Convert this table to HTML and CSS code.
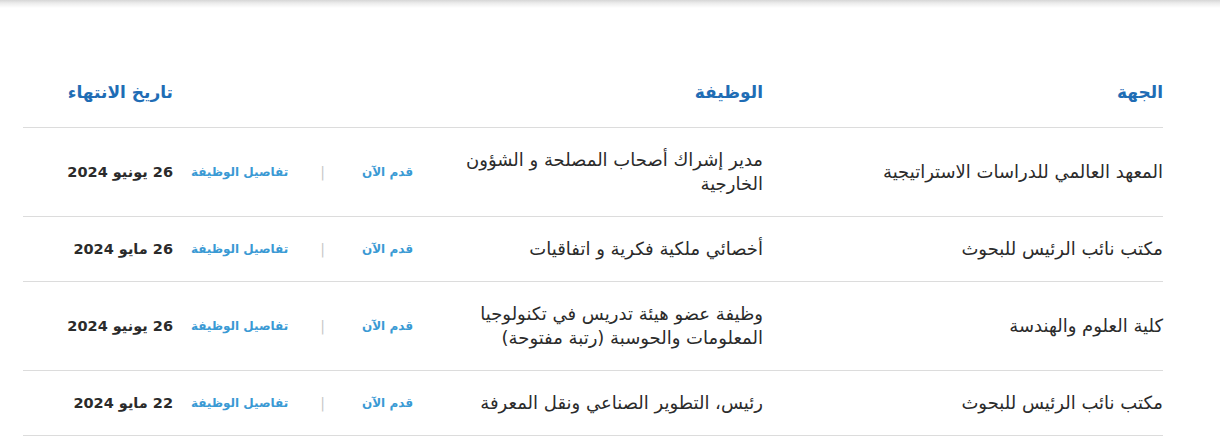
FILE: index.html
```html
<!DOCTYPE html>
<html lang="ar" dir="rtl">
<head>
<meta charset="utf-8">
<link rel="stylesheet" href="styles.css">
</head>
<body>
<div class="topshade"></div>
<main class="wrap">
  <table class="jobs">
    <colgroup>
      <col class="c-org"><col class="c-job"><col class="c-act"><col class="c-date">
    </colgroup>
    <thead>
      <tr>
        <th>الجهة</th>
        <th>الوظيفة</th>
        <th></th>
        <th>تاريخ الانتهاء</th>
      </tr>
    </thead>
    <tbody>
      <tr>
        <td>المعهد العالمي للدراسات الاستراتيجية</td>
        <td class="job"><span class="jt">مدير إشراك أصحاب المصلحة و الشؤون الخارجية</span></td>
        <td class="act"><div class="links"><a class="lnk">قدم الآن</a><span class="sep">|</span><a class="lnk">تفاصيل الوظيفة</a></div></td>
        <td class="date">26 يونيو 2024</td>
      </tr>
      <tr>
        <td>مكتب نائب الرئيس للبحوث</td>
        <td class="job"><span class="jt">أخصائي ملكية فكرية و اتفاقيات</span></td>
        <td class="act"><div class="links"><a class="lnk">قدم الآن</a><span class="sep">|</span><a class="lnk">تفاصيل الوظيفة</a></div></td>
        <td class="date">26 مايو 2024</td>
      </tr>
      <tr>
        <td>كلية العلوم والهندسة</td>
        <td class="job"><span class="jt">وظيفة عضو هيئة تدريس في تكنولوجيا المعلومات والحوسبة (رتبة مفتوحة)</span></td>
        <td class="act"><div class="links"><a class="lnk">قدم الآن</a><span class="sep">|</span><a class="lnk">تفاصيل الوظيفة</a></div></td>
        <td class="date">26 يونيو 2024</td>
      </tr>
      <tr>
        <td>مكتب نائب الرئيس للبحوث</td>
        <td class="job"><span class="jt">رئيس، التطوير الصناعي ونقل المعرفة</span></td>
        <td class="act"><div class="links"><a class="lnk">قدم الآن</a><span class="sep">|</span><a class="lnk">تفاصيل الوظيفة</a></div></td>
        <td class="date">22 مايو 2024</td>
      </tr>
    </tbody>
  </table>
</main>
</body>
</html>
```

FILE: styles.css
```css
html, body {
  margin: 0;
  padding: 0;
  background: #fff;
}
body {
  font-family: "DejaVu Sans", "Noto Sans", sans-serif;
  color: #2b2b2b;
}
.topshade {
  height: 8px;
  background: linear-gradient(to bottom, #d6d6d6 0%, #ececec 40%, #ffffff 100%);
}
.wrap {
  padding: 53px 57px 0 23px;
}
.jobs {
  width: 1140px;
  border-collapse: collapse;
  table-layout: fixed;
}
.c-org { width: 400px; }
.c-job { width: 350px; }
.c-act { width: 240px; }
.c-date { width: 150px; }
.jobs th {
  text-align: right;
  font-size: 17px;
  font-weight: bold;
  color: #1f6db5;
  padding: 18px 0 22px 0;
  line-height: 26px;
  border-bottom: 1px solid #dcdcdc;
}
.jobs td {
  text-align: right;
  font-size: 18px;
  line-height: 24px;
  padding: 20px 0;
  border-bottom: 1px solid #dcdcdc;
  vertical-align: middle;
}
.job .jt {
  display: block;
  max-width: 305px;
}
.links {
  display: flex;
  align-items: center;
}
.lnk {
  color: #3a9ad4;
  font-size: 12px;
  font-weight: bold;
  text-decoration: none;
}
.sep {
  color: #c8c8c8;
  font-size: 14px;
  margin: 0 37px 0 32px;
}
.jobs td.date {
  font-weight: bold;
  font-size: 14.5px;
}
```
